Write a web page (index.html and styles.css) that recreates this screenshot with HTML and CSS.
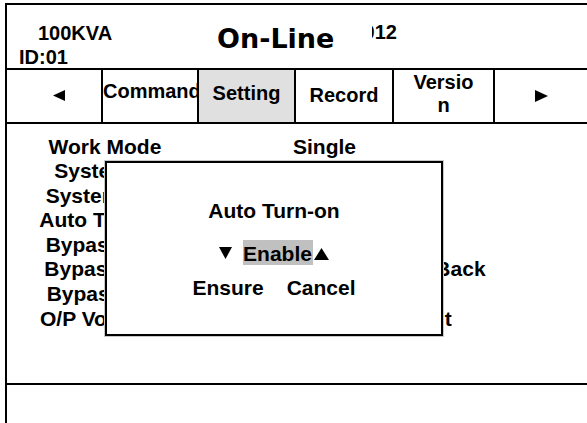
FILE: index.html
```html
<!DOCTYPE html>
<html lang="en">
<head>
<meta charset="utf-8">
<title>UPS Setting</title>
<link rel="stylesheet" href="styles.css">
</head>
<body>
<div class="screen">
  <header class="top">
    <div class="model">
      <div class="kva">100KVA</div>
      <div class="unit-id">ID:01</div>
    </div>
    <div class="status">On-Line</div>
    <div class="clock"><span>2012</span></div>
  </header>

  <nav class="tabs">
    <div class="tab tab-prev">
      <svg class="arrow-left" width="12" height="11" viewBox="0 0 12 11"><polygon points="12,0 12,11 0,5.5"/></svg>
    </div>
    <div class="tab tab-command">Command</div>
    <div class="tab tab-active">Setting</div>
    <div class="tab tab-record">Record</div>
    <div class="tab">Versio<br>n</div>
    <div class="tab tab-next">
      <svg class="arrow-right" width="13" height="12" viewBox="0 0 13 12"><polygon points="0,0 13,6 0,12"/></svg>
    </div>
  </nav>

  <main class="settings">
    <div class="label">Work Mode</div><div class="value">Single</div>
    <div class="label">System ID</div><div class="value">01</div>
    <div class="label">System Volt</div><div class="value">220V</div>
    <div class="label">Auto Turn-on</div><div class="value">Enable</div>
    <div class="label">Bypass Volt</div><div class="value">+15%</div>
    <div class="label">Bypass Max</div><div class="value">Auto Transfer Back</div>
    <div class="label">Bypass Min</div><div class="value">-20%</div>
    <div class="label">O/P Volt Trim</div><div class="value">Rectifier Output</div>

    <div class="dialog">
      <div class="dialog-title">Auto Turn-on</div>
      <div class="picker">
        <svg class="tri-down" width="13" height="12" viewBox="0 0 13 12"><polygon points="0,0 13,0 6.5,12"/></svg>
        <span class="choice">Enable</span>
        <svg class="tri-up" width="15" height="12" viewBox="0 0 15 12"><polygon points="7.5,0 15,12 0,12"/></svg>
      </div>
      <div class="actions">
        <span>Ensure</span>
        <span>Cancel</span>
      </div>
    </div>
  </main>

  <footer class="bottom"></footer>
</div>
</body>
</html>
```

FILE: styles.css
```css
* {
  box-sizing: border-box;
  margin: 0;
  padding: 0;
}

html,
body {
  overflow: hidden;
  background: #fff;
}

body {
  font-family: "Liberation Sans", Arial, sans-serif;
  font-weight: bold;
  color: #000;
}

.screen {
  margin: 3px 0 0 5px;
  width: 588px;
  height: 440px;
  border: 2px solid #000;
  display: flex;
  flex-direction: column;
}

/* header */
.top {
  height: 63px;
  flex-shrink: 0;
  display: flex;
  align-items: flex-start;
}

.model {
  width: 210px;
  padding: 16px 0 0 12px;
  font-size: 20px;
  line-height: 24px;
}

.kva {
  padding-left: 19px;
}

.status {
  width: 155px;
  padding-top: 18px;
  font-family: "DejaVu Sans", sans-serif;
  font-size: 27px;
  line-height: 32px;
}

.clock {
  width: 25px;
  padding-top: 17px;
  display: flex;
  justify-content: flex-end;
  overflow: hidden;
  font-size: 20px;
  line-height: 20px;
  white-space: nowrap;
}

/* tabs */
.tabs {
  flex-shrink: 0;
  height: 56px;
  display: grid;
  grid-template-columns: 96px 96px 97px 98px 101px 1fr;
  border-top: 2px solid #000;
  border-bottom: 2px solid #000;
}

.tab {
  border-right: 2px solid #000;
  display: flex;
  flex-direction: column;
  justify-content: center;
  text-align: center;
  font-size: 20px;
  line-height: 23px;
  padding-bottom: 4px;
  white-space: nowrap;
}

.tab:last-child {
  border-right: 0;
}

.tab-command {
  padding-bottom: 10px;
}

.tab-active {
  background: #e0e0e0;
  padding-bottom: 6px;
}

.tab-record {
  padding-bottom: 2px;
}

.tab-prev {
  align-items: center;
  padding: 0 0 2px 9px;
}

.tab-next {
  align-items: center;
  padding: 0 3px 0 0;
}

.tab svg {
  display: block;
  fill: #000;
}

/* settings list */
.settings {
  position: relative;
  height: 259px;
  flex-shrink: 0;
  padding-top: 10.5px;
  display: grid;
  grid-template-columns: 196px 1fr;
  column-gap: 90px;
  grid-auto-rows: 24.6px;
  align-content: start;
  font-size: 21px;
  line-height: 24.6px;
}

.label {
  text-align: center;
  white-space: nowrap;
}

.value {
  white-space: nowrap;
}

/* dialog */
.dialog {
  position: absolute;
  left: 98px;
  top: 37px;
  width: 338px;
  height: 175px;
  border: 2px solid #000;
  background: #fff;
  box-shadow: 0 0 0 1px #c8c8c8;
  display: flex;
  flex-direction: column;
  align-items: center;
  padding-top: 36px;
  font-size: 21px;
  line-height: 23px;
}

.dialog-title {
  margin-bottom: 18px;
}

.picker {
  height: 25px;
  display: flex;
  align-items: center;
}

.picker svg {
  display: block;
  fill: #000;
}

.tri-down {
  margin-right: 11px;
}

.choice {
  background: #c0c0c0;
  padding: 2px 1px 0 0;
  line-height: 23px;
}

.tri-up {
  margin: 3px 0 0 1px;
}

.actions {
  margin-top: 11px;
  display: flex;
  gap: 23px;
}

/* bottom status area */
.bottom {
  flex: 1;
  border-top: 2px solid #000;
}
```
